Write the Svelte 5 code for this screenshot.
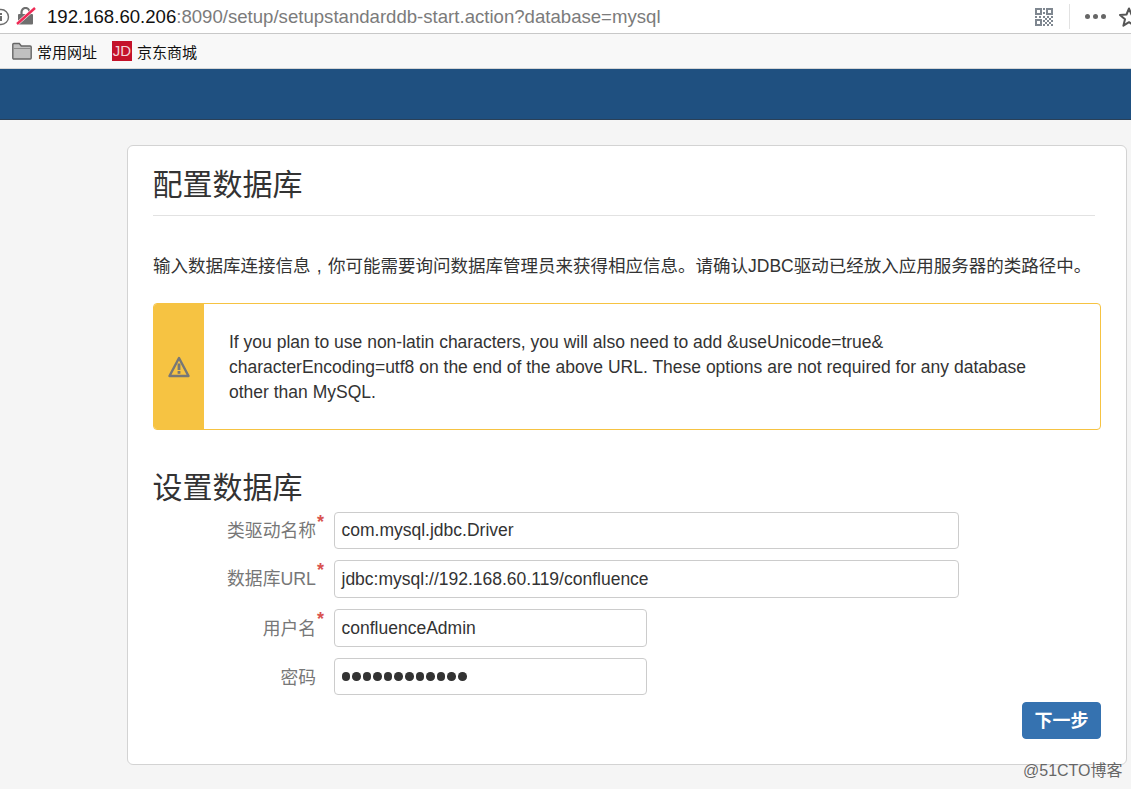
<script>
	const fields = [
		{ label: '类驱动名称', value: 'com.mysql.jdbc.Driver', req: true, short: false },
		{ label: '数据库URL', value: 'jdbc:mysql://192.168.60.119/confluence', req: true, short: false },
		{ label: '用户名', value: 'confluenceAdmin', req: true, short: true },
		{ label: '密码', value: '', pass: 12, req: false, short: true }
	];
</script>

<div class="chrome">
	<div class="addr">
		<svg class="info" width="10" height="20" viewBox="0 0 10 20">
			<circle cx="1" cy="10" r="7.5" fill="none" stroke="#6d6d6d" stroke-width="1.4" />
			<rect x="0" y="9" width="2" height="5" fill="#6d6d6d" />
			<rect x="0" y="6" width="2" height="2" fill="#6d6d6d" />
		</svg>
		<svg class="lock" width="20" height="20" viewBox="0 0 20 20">
			<path d="M5.500 7V5a4 4 0 0 1 8 0v2" fill="none" stroke="#6f6f6f" stroke-width="2.200" />
			<rect x="2" y="7" width="15" height="10.500" rx="1" fill="#6f6f6f" />
			<path d="M1 17 19 1" stroke="#fff" stroke-width="3.600" />
			<path d="M1 17 19 1" stroke="#ee2a55" stroke-width="2.400" />
		</svg>
		<span class="url"><b>192.168.60.206</b>:8090/setup/setupstandarddb-start.action?database=mysql</span>
		<svg class="qr" width="20" height="20" viewBox="0 0 20 20">
			<path fill="none" stroke="#7f8790" stroke-width="2" d="M2 2h5v5H2zM13 2h5v5h-5zM2 13h5v5H2z" />
			<path fill="#7f8790" d="M9 1h2v2H9zM9 5h2v2H9zM1 9h2v2H1zM5 9h2v2H5zM9 9h2v2H9zM13 9h2v2h-2zM17 9h2v2h-2zM11 11h2v2h-2zM15 11h2v2h-2zM9 13h2v2H9zM13 13h2v2h-2zM17 13h2v2h-2zM11 15h2v2h-2zM15 15h2v2h-2zM9 17h2v2H9zM13 17h2v2h-2zM17 17h2v2h-2z" />
		</svg>
		<span class="sep"></span>
		<span class="dots"><i></i><i></i><i></i></span>
		<svg class="star" width="18" height="20" viewBox="0 0 18 20">
			<path d="M10 1.500 12.500 7.500 19 8l-5 4.300 1.600 6.400L10 15.200 4.400 18.700 6 12.300 1 8l6.500-.5z" fill="none" stroke="#555" stroke-width="2" stroke-linejoin="round" />
		</svg>
	</div>
	<div class="bookmarks">
		<span class="bm">
			<svg width="20" height="18" viewBox="0 0 20 18">
				<path d="M.8 16V2.500a1 1 0 0 1 1-1h5.500l2 2.500h8.900a1 1 0 0 1 1 1v11a1 1 0 0 1-1 1H1.800a1 1 0 0 1-1-1z" fill="#c0c0c0" stroke="#666" stroke-width="1.400" />
				<path d="M1.500 6.500h17" stroke="#8a8a8a" />
			</svg>
			常用网址
		</span>
		<span class="bm">
			<span class="jd">JD</span>
			京东商城
		</span>
	</div>
</div>

<header class="nav"></header>

<main class="page">
	<section class="card">
		<h1>配置数据库</h1>
		<p class="intro">输入数据库连接信息<span class="comma">,</span>你可能需要询问数据库管理员来获得相应信息。请确认JDBC驱动已经放入应用服务器的类路径中。</p>

		<div class="alert">
			<div class="alert-icon">
				<svg width="22" height="22" viewBox="0 0 22 22">
					<path d="M11 2 20.500 20H1.500z" fill="none" stroke="#777" stroke-width="2.400" stroke-linejoin="round" />
					<rect x="9.600" y="7.500" width="2.800" height="6.500" fill="#777" />
					<rect x="9.600" y="15" width="2.800" height="2.800" fill="#777" />
				</svg>
			</div>
			<div class="alert-body">If you plan to use non-latin characters, you will also need to add &amp;useUnicode=true&amp; characterEncoding=utf8 on the end of the above URL. These options are not required for any database other than MySQL.</div>
		</div>

		<h2>设置数据库</h2>
		<form class="form">
			{#each fields as f}
				<div class="row">
					<span class="label">{f.label}{#if f.req}<sup>*</sup>{/if}</span>
					<div class="input" class:short={f.short}>
						{#if f.pass}
							<span class="pass">{#each Array(f.pass) as _}<i></i>{/each}</span>
						{:else}
							{f.value}
						{/if}
					</div>
				</div>
			{/each}
			<div class="actions"><button type="button">下一步</button></div>
		</form>
	</section>
</main>

<span class="watermark">@51CTO博客</span>

<style>
	:global(body) {
		margin: 0;
		background: #f5f5f5;
		overflow: hidden;
		font-family: "Liberation Sans", "Noto Sans CJK SC", sans-serif;
	}

	.chrome {
		background: #fff;
	}
	.addr {
		height: 33px;
		display: flex;
		align-items: center;
		border-bottom: 1px solid #c8c8c8;
	}
	.info {
		flex: none;
	}
	.lock {
		flex: none;
		margin-left: 6px;
	}
	.url {
		margin-left: 11px;
		font-size: 18.600px;
		color: #7b7b7b;
		white-space: nowrap;
		width: 989px;
		flex: none;
	}
	.url b {
		font-weight: normal;
		color: #111;
	}
	.qr {
		flex: none;
		margin-left: -2px;
	}
	.sep {
		flex: none;
		width: 1px;
		height: 25px;
		margin-left: 15px;
		background: #e2e2e2;
	}
	.dots {
		flex: none;
		display: flex;
		gap: 3px;
		margin-left: 15px;
	}
	.dots i {
		width: 5px;
		height: 5px;
		border-radius: 50%;
		background: #666;
	}
	.star {
		flex: none;
		margin-left: 13px;
	}
	.bookmarks {
		height: 34px;
		display: flex;
		align-items: center;
		gap: 15px;
		padding-left: 12px;
		background: #f8f8f8;
		border-bottom: 1px solid #d6d6d6;
	}
	.bm {
		display: flex;
		align-items: center;
		gap: 5px;
		font-size: 15px;
		color: #111;
	}
	.jd {
		width: 20px;
		height: 20px;
		background: #c4122a;
		color: #f4d5d8;
		font-size: 15px;
		line-height: 20px;
		text-align: center;
	}

	.nav {
		height: 51px;
		background: #1f5080;
		border-bottom: 1px solid #2a4057;
		box-sizing: border-box;
	}

	.page {
		padding: 25px 4px 0 127px;
	}
	.card {
		box-sizing: border-box;
		height: 620px;
		padding: 0 25px;
		background: #fff;
		border: 1px solid #d3d3d3;
		border-radius: 6px;
		color: #333;
	}
	h1 {
		margin: 0 6px 0 0;
		padding: 18px 0 10px;
		font-size: 30px;
		line-height: 41px;
		font-weight: 400;
		text-indent: -0.5px;
		border-bottom: 1px solid #e2e2e2;
		color: #333;
	}
	.intro {
		margin: 36px 0 0;
		font-size: 17.500px;
		line-height: 28px;
		white-space: nowrap;
	}
	.comma {
		display: inline-block;
		width: 1em;
		text-align: center;
	}
	.alert {
		display: flex;
		height: 127px;
		box-sizing: border-box;
		margin-top: 23px;
		border: 1px solid #f6c342;
		border-radius: 4px;
		overflow: hidden;
	}
	.alert-icon {
		flex: none;
		width: 50px;
		display: flex;
		align-items: center;
		justify-content: center;
		background: #f6c342;
	}
	.alert-body {
		padding: 26px 50px 0 25px;
		font-size: 17.500px;
		line-height: 25px;
	}
	h2 {
		margin: 37px 0 0;
		font-size: 30px;
		line-height: 41px;
		font-weight: 400;
		text-indent: -0.5px;
		color: #333;
	}
	.form {
		margin-top: 4px;
	}
	.row {
		display: flex;
		align-items: flex-start;
		height: 38px;
		margin-bottom: 11px;
	}
	.row:first-child {
		margin-bottom: 10px;
	}
	.label {
		flex: none;
		box-sizing: border-box;
		width: 181px;
		padding: 7px 18px 0 0;
		position: relative;
		text-align: right;
		font-size: 17.800px;
		line-height: 24px;
		color: #777;
		white-space: nowrap;
	}
	.row:nth-child(3) .label,
	.row:nth-child(4) .label {
		padding-top: 8px;
	}
	sup {
		position: absolute;
		top: 0;
		right: 10px;
		font-size: 18px;
		font-weight: 700;
		line-height: 20px;
		color: #d9534f;
	}
	.input {
		box-sizing: border-box;
		width: 625px;
		height: 37px;
		padding: 0 6.500px;
		display: flex;
		align-items: center;
		border: 1px solid #ccc;
		border-radius: 4px;
		font-size: 17.500px;
		color: #333;
	}
	.row:nth-child(2) .input,
	.row:nth-child(3) .input {
		height: 38px;
	}
	.input.short {
		width: 313px;
	}
	.pass {
		display: flex;
		gap: 2.100px;
	}
	.pass i {
		width: 8.500px;
		height: 8.500px;
		border-radius: 50%;
		background: #333;
	}
	.actions {
		display: flex;
		justify-content: flex-end;
		margin-top: -5px;
	}
	button {
		width: 79px;
		height: 37px;
		padding: 0 0 4px;
		border: 1px solid #3572b0;
		border-radius: 4px;
		background: #3572b0;
		color: #fff;
		font: 700 18px "Liberation Sans", "Noto Sans CJK SC", sans-serif;
	}

	.watermark {
		position: absolute;
		top: 760px;
		left: 1023px;
		font-size: 16px;
		line-height: 22px;
		color: #666;
		white-space: nowrap;
		text-shadow: 0 0 1px #fff;
	}
</style>
